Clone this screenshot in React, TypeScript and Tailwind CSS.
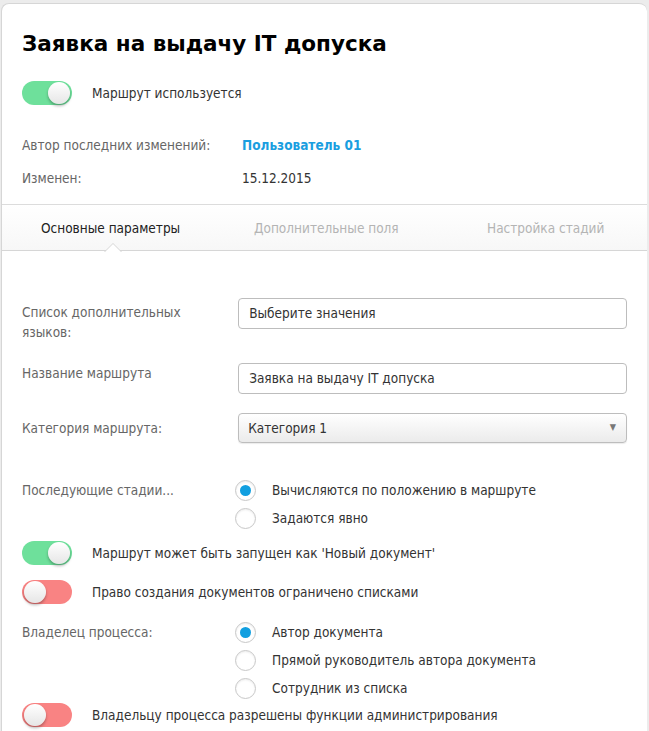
const body = "font-['DejaVu_Sans_Condensed','DejaVu_Sans',sans-serif]";

function Toggle({ on }: { on: boolean }) {
  return (
    <div
      className={`relative w-[50px] h-[24px] rounded-full shrink-0 ${on ? "bg-[#6ee09b]" : "bg-[#f98383]"}`}
    >
      <div
        className={`absolute top-[1px] w-[22px] h-[22px] rounded-full bg-gradient-to-b from-white to-[#e6e6e6] shadow-[0_2px_3px_rgba(0,0,0,0.3)] ${on ? "right-[2px]" : "left-[2px]"}`}
      ></div>
    </div>
  );
}

function ToggleRow({ on, label }: { on: boolean; label: string }) {
  return (
    <div className="flex items-center gap-5 h-[24px]">
      <Toggle on={on} />
      <span className="text-[#333]">{label}</span>
    </div>
  );
}

function Radio({ checked, label }: { checked: boolean; label: string }) {
  return (
    <div className="flex items-center gap-4 h-[28px]">
      <div className="w-[21px] h-[21px] rounded-full border border-[#c8c8c8] bg-white flex items-center justify-center shadow-[inset_0_1px_2px_rgba(0,0,0,0.08)]">
        {checked && <div className="w-[11px] h-[11px] rounded-full bg-[#119fe0]"></div>}
      </div>
      <span className="text-[#333]">{label}</span>
    </div>
  );
}

export default function App() {
  return (
    <div className="min-h-screen bg-[#ececec] pl-[1px] pt-[3px] overflow-hidden">
      <div className={`w-[646px] bg-white border-l border-t border-[#d6d6d6] rounded-tl-[8px] rounded-tr-[8px] text-[13.5px] ${body}`}>
        <div className="px-5 pt-[26px]">
          <h1 className="font-['DejaVu_Sans',sans-serif] font-bold text-[21.5px] text-black leading-[28px]">
            Заявка на выдачу IT допуска
          </h1>
          <div className="mt-[23px]">
            <ToggleRow on={true} label="Маршрут используется" />
          </div>
          <div className="mt-[31px] flex flex-col gap-[14px]">
            <div className="flex items-center h-[19px]">
              <span className="w-[220px] text-[#666]">Автор последних изменений:</span>
              <span className="text-[#1a9ee0] font-bold">Пользователь 01</span>
            </div>
            <div className="flex items-center h-[19px]">
              <span className="w-[220px] text-[#666]">Изменен:</span>
              <span className="text-[#333]">15.12.2015</span>
            </div>
          </div>
        </div>

        <div className="mt-[16px] border-t border-[#dcdcdc] relative bg-gradient-to-b from-white to-[#f7f7f7]">
          <div className="flex items-center h-[45px] pt-[2px]">
            <span className="pl-[39px] w-[252px] text-[#222]">Основные параметры</span>
            <span className="w-[233px] text-[#b4b4b4]">Дополнительные поля</span>
            <span className="text-[#b4b4b4]">Настройка стадий</span>
          </div>
          <div className="border-b border-[#d6d6d6]"></div>
          <div className="absolute left-[102px] bottom-[-1px] w-0 h-0 border-l-[9px] border-r-[9px] border-b-[9px] border-l-transparent border-r-transparent border-b-[#d6d6d6]"></div>
          <div className="absolute left-[103px] bottom-[-1px] w-0 h-0 border-l-[8px] border-r-[8px] border-b-[8px] border-l-transparent border-r-transparent border-b-white"></div>
        </div>

        <div className="px-5 pt-[47px] pb-4">
          <div className="flex items-start">
            <span className="w-[218px] text-[#666] leading-[20px] pt-[4px]">
              Список дополнительных
              <br />
              языков:
            </span>
            <div className="w-[392px] h-[31px] border border-[#bdbdbd] rounded-[4px] flex items-center px-[10px] text-[#333]">
              Выберите значения
            </div>
          </div>
          <div className="flex items-start mt-[21px]">
            <span className="w-[218px] text-[#666] leading-[20px]">Название маршрута</span>
            <div className="w-[392px] h-[31px] border border-[#bdbdbd] rounded-[4px] flex items-center px-[10px] text-[#333]">
              Заявка на выдачу IT допуска
            </div>
          </div>
          <div className="flex items-center mt-[19px]">
            <span className="w-[218px] text-[#666]">Категория маршрута:</span>
            <div className="w-[392px] h-[30px] border border-[#bdbdbd] rounded-[4px] flex items-center justify-between pl-[9px] pr-[10px] text-[#333] bg-gradient-to-b from-white to-[#ebebeb] shadow-[0_1px_1px_rgba(0,0,0,0.08)]">
              <span>Категория 1</span>
              <span className="text-[#777] text-[9px]">▼</span>
            </div>
          </div>

          <div className="flex items-start mt-[33px]">
            <span className="w-[213px] text-[#666] leading-[28px]">Последующие стадии...</span>
            <div className="flex flex-col">
              <Radio checked={true} label="Вычисляются по положению в маршруте" />
              <Radio checked={false} label="Задаются явно" />
            </div>
          </div>

          <div className="mt-[9px]">
            <ToggleRow on={true} label="Маршрут может быть запущен как 'Новый документ'" />
          </div>
          <div className="mt-[15px]">
            <ToggleRow on={false} label="Право создания документов ограничено списками" />
          </div>

          <div className="flex items-start mt-[14px]">
            <span className="w-[213px] text-[#666] leading-[28px]">Владелец процесса:</span>
            <div className="flex flex-col">
              <Radio checked={true} label="Автор документа" />
              <Radio checked={false} label="Прямой руководитель автора документа" />
              <Radio checked={false} label="Сотрудник из списка" />
            </div>
          </div>
          <div className="mt-[1px]">
            <ToggleRow on={false} label="Владельцу процесса разрешены функции администрирования" />
          </div>
        </div>
      </div>
    </div>
  );
}
